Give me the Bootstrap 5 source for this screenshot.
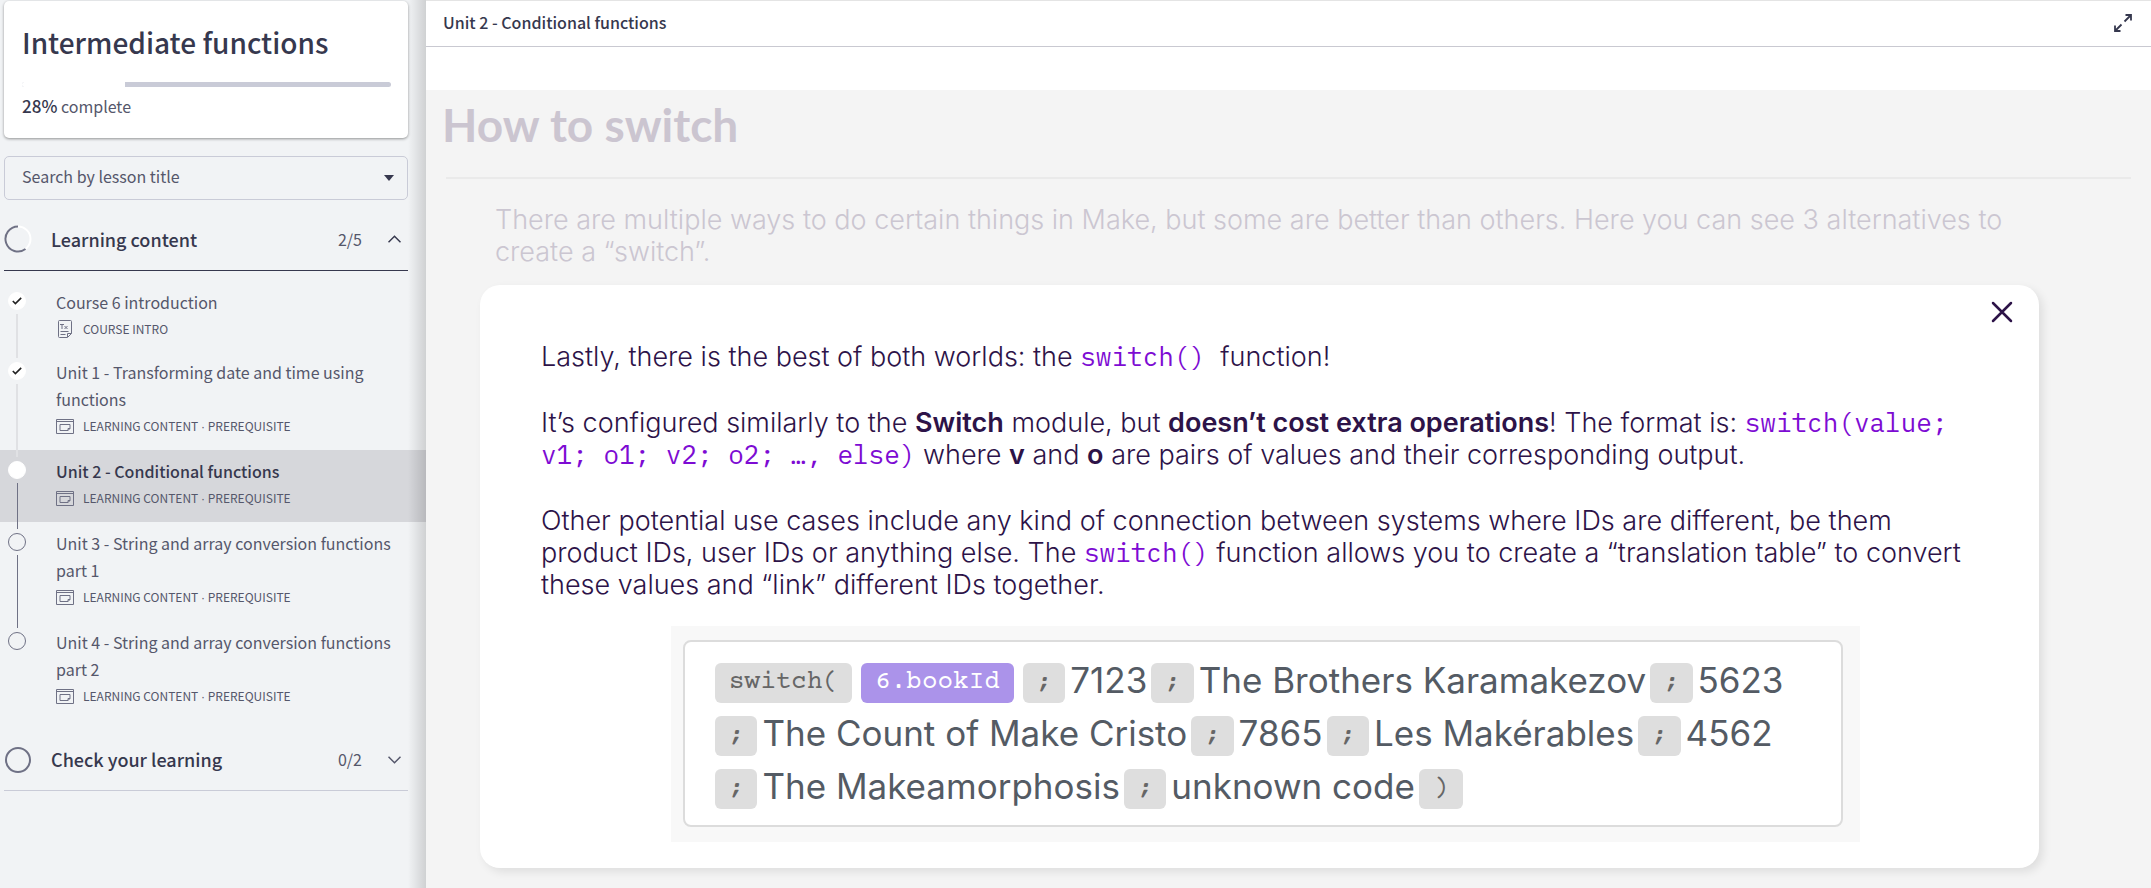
<!DOCTYPE html>
<html lang="en">
<head>
<meta charset="utf-8">
<meta name="viewport" content="width=device-width, initial-scale=1">
<title>Intermediate functions</title>
<link rel="stylesheet" href="https://cdn.jsdelivr.net/npm/bootstrap@5.3.0/dist/css/bootstrap.min.css">
<style>
  :root { --ink: #36384e; --ink-soft: #55576b; --line: #c9cbd7; --rail: #6f7185; }
  body { font-family: "Noto Sans CJK SC", "Noto Sans", sans-serif; font-size: 16px; line-height: 27px; color: var(--ink); background: #f4f4f4; }
  a { color: inherit; text-decoration: none; }

  .course-side { width: 426px; background: #f1f3f5; padding: 1px 18px 0 4px; position: relative; }
  .course-side::after { content: ""; position: absolute; inset: 0 0 0 auto; width: 18px; pointer-events: none; background: linear-gradient(to right, rgba(0,0,0,0), rgba(0,0,0,.14)); }
  .course-card { border: 0; border-radius: 5px; height: 137px; padding: 20px 17px 0 18px; box-shadow: 0 1px 3px rgba(0,0,0,.4); color: var(--ink); }
  .course-card h1 { font-size: 28px; line-height: 42px; font-weight: 500; margin: 0 0 19px; }
  .progress { height: 5px; border-radius: 3px; background: var(--line); }
  .progress-bar { background: #fff; }
  .done-text { margin-top: 5px; color: var(--ink-soft); }
  .done-text strong { font-weight: 500; color: var(--ink); font-size: 17px; }

  .lesson-search { height: 44px; margin-top: 18px; border: 1px solid var(--line); border-radius: 5px; padding: 0 13px 0 17px; }
  .lesson-search select { appearance: none; border: 0; background: none; outline: 0; padding: 0 0 3px; color: var(--ink-soft); font-size: 16px; }

  .section-head { height: 62px; border: 0; border-bottom: 1px solid var(--line); background: none; color: var(--ink); padding: 0 7px 0 0; text-align: left; }
  .section-head.is-open { border-color: var(--ink); height: 63px; margin-top: 8px; }
  .section-head .title { font-size: 18px; font-weight: 500; margin-left: 19px; }
  .section-head .count { font-size: 16px; color: var(--ink-soft); margin-right: 26px; }

  .lesson-list { margin: 10px -18px 9px -4px; }
  .lesson { display: flex; padding: 8px 24px 0 8px; }
  .lesson .step { width: 18px; margin-right: 30px; display: flex; flex-direction: column; align-items: center; }
  .lesson .dot { flex: none; width: 18px; height: 18px; margin: 3px 0 4px; border-radius: 50%; border: 1px solid var(--rail); display: flex; align-items: center; justify-content: center; }
  .lesson .dot.filled { background: #fff; border-color: #fff; }
  .lesson .rail { flex: 1; width: 1px; background: var(--rail); margin-bottom: -7px; z-index: 1; }
  .lesson .rail.done { width: 2px; background: #e0e1e4; }
  .lesson .info { flex: 1; padding-bottom: 10px; }
  .lesson .name { color: var(--ink-soft); display: block; }
  .lesson .meta { display: flex; align-items: center; gap: 9px; font-size: 12px; line-height: 25px; color: var(--ink-soft); }
  .lesson .sep-dot { font-family: "Liberation Sans", sans-serif; }
  .lesson.current { background: #d6d7db; }
  .lesson.current .name { font-weight: 500; color: var(--ink); }

  .top-bar { height: 47px; background: #fff; border-top: 1px solid #e4e4e4; border-bottom: 1px solid #c9c9d1; padding: 0 19px 2px 17px; }
  .top-bar h2 { font-size: 16px; line-height: 27px; font-weight: 500; margin: 0; }
  .spacer-band { height: 43px; background: #fff; }

  .lesson-body { padding: 0 20px 20px 16px; font-family: Inter, "Liberation Sans", sans-serif; font-size: 27px; font-weight: 300; line-height: 32px; background: #f4f4f4; }
  .lesson-body h3 { font-family: Lato, sans-serif; font-weight: 700; font-size: 46px; line-height: 56px; color: #cbc5d0; margin: 0; padding: 7px 0 24px; }
  .lesson-body hr { margin: 0 0 25px 4px; border: 0; height: 2px; background: #eaeaea; opacity: 1; }
  .lead-in { margin: 0 120px 17px 53px; color: #cbc6d1; }

  .popup { margin: 0 92px 0 38px; background: #fff; border-radius: 20px; box-shadow: 4px 4px 10px rgba(0,0,0,.09); color: #2d1348; padding: 56px 61px 26px; position: relative; }
  .popup p { margin: 0 0 34px; }
  .popup p.last { margin-bottom: 25px; }
  .popup strong { font-weight: 600; }
  .popup code { font-family: "IBM Plex Mono", "Liberation Mono", monospace; font-size: 26px; font-weight: 400; line-height: 1; color: #7d0bd3; }
  .popup .close-x { position: absolute; top: 14px; right: 24px; padding: 0; border: 0; background: none; color: #2d1348; line-height: 0; }

  .formula { background: #f8f8f8; padding: 14px 17px 15px 12px; margin: 0 118px 0 130px; }
  .formula-box { background: #fff; border: 2px solid #dcdcdc; border-radius: 8px; padding: 12px 30px; color: #545b64; font-size: 35px; font-weight: 400; line-height: 53px; }
  .formula-row { display: flex; align-items: center; white-space: pre; }
  .chip { flex: none; font-family: "Courier Prime", "Liberation Mono", monospace; font-size: 26px; line-height: 40px; height: 40px; border-radius: 6px; background: #dedede; color: #666; padding: 0 14px; margin: 5px 5px 0 4px; }
  .chip:first-child { margin-left: 0; }
  .chip.ref { background: #ab93ea; color: #fff; }
  .chip.sep { font-style: italic; font-weight: 700; font-size: 24px; }
</style>
</head>
<body>
<div class="d-flex min-vh-100">
  <aside class="course-side flex-shrink-0">
    <div class="card course-card">
      <h1>Intermediate functions</h1>
      <div class="progress" role="progressbar" aria-label="Course progress" aria-valuenow="28" aria-valuemin="0" aria-valuemax="100"><div class="progress-bar" style="width:28%"></div></div>
      <div class="done-text"><strong>28%</strong> complete</div>
    </div>

    <div class="lesson-search d-flex align-items-center">
      <select class="flex-grow-1" aria-label="Search by lesson title"><option>Search by lesson title</option></select>
      <svg width="10" height="6" viewBox="0 0 10 6" aria-hidden="true"><path d="M0 0h10L5 6z" fill="#36384e"/></svg>
    </div>

    <button type="button" class="section-head is-open w-100 d-flex align-items-center">
      <svg width="28" height="28" viewBox="0 0 28 28" fill="none" stroke-width="2" aria-hidden="true"><circle cx="14" cy="14" r="12.5" stroke="#fff"/><path d="M14 1.500A12.500 12.500 0 1 0 21.500 24" stroke="#6f7185"/></svg>
      <span class="title flex-grow-1">Learning content</span>
      <span class="count">2/5</span>
      <svg width="13" height="8" viewBox="0 0 13 8" fill="none" stroke="#36384e" stroke-width="1.500" aria-hidden="true"><path d="M.5 7.200l6-6 6 6"/></svg>
    </button>

    <div class="lesson-list">
      <a class="lesson" href="#">
        <span class="step"><span class="dot filled"><svg width="10" height="8" viewBox="0 0 10 8" fill="none" stroke="#222" stroke-width="1.600"><path d="M.8 4l2.600 2.600L9.200.9"/></svg></span><span class="rail done"></span></span>
        <span class="info"><span class="name">Course 6 introduction</span>
          <span class="meta"><svg width="18" height="18" viewBox="0 0 18 18" fill="none" stroke="#6f7185"><path d="M3.500.5h11a1 1 0 0 1 1 1v12l-4 4h-8a1 1 0 0 1-1-1v-15a1 1 0 0 1 1-1zM11.500 17v-3.500h4M4.500 11.500h8M4.500 14.500h5M4 4.500h4M6 4.500v4.500M8.500 6l3 3M11.500 6l-3 3"/></svg>COURSE INTRO</span></span>
      </a>
      <a class="lesson" href="#">
        <span class="step"><span class="dot filled"><svg width="10" height="8" viewBox="0 0 10 8" fill="none" stroke="#222" stroke-width="1.600"><path d="M.8 4l2.600 2.600L9.200.9"/></svg></span><span class="rail done"></span></span>
        <span class="info"><span class="name">Unit 1 - Transforming date and time using functions</span>
          <span class="meta"><svg width="18" height="15" viewBox="0 0 18 15" fill="none" stroke="#6f7185"><path d="M.5.5h17v14H.5zM.5 2.500h17M4 5.500h10v4l-2 2H4zM12 11.500v-2h2"/></svg><span>LEARNING CONTENT <span class="sep-dot">·</span> PREREQUISITE</span></span></span>
      </a>
      <a class="lesson current" href="#" aria-current="page">
        <span class="step"><span class="dot filled"></span><span class="rail"></span></span>
        <span class="info"><span class="name">Unit 2 - Conditional functions</span>
          <span class="meta"><svg width="18" height="15" viewBox="0 0 18 15" fill="none" stroke="#6f7185"><path d="M.5.5h17v14H.5zM.5 2.500h17M4 5.500h10v4l-2 2H4zM12 11.500v-2h2"/></svg><span>LEARNING CONTENT <span class="sep-dot">·</span> PREREQUISITE</span></span></span>
      </a>
      <a class="lesson" href="#">
        <span class="step"><span class="dot"></span><span class="rail"></span></span>
        <span class="info"><span class="name">Unit 3 - String and array conversion functions part 1</span>
          <span class="meta"><svg width="18" height="15" viewBox="0 0 18 15" fill="none" stroke="#6f7185"><path d="M.5.5h17v14H.5zM.5 2.500h17M4 5.500h10v4l-2 2H4zM12 11.500v-2h2"/></svg><span>LEARNING CONTENT <span class="sep-dot">·</span> PREREQUISITE</span></span></span>
      </a>
      <a class="lesson" href="#">
        <span class="step"><span class="dot"></span></span>
        <span class="info"><span class="name">Unit 4 - String and array conversion functions part 2</span>
          <span class="meta"><svg width="18" height="15" viewBox="0 0 18 15" fill="none" stroke="#6f7185"><path d="M.5.5h17v14H.5zM.5 2.500h17M4 5.500h10v4l-2 2H4zM12 11.500v-2h2"/></svg><span>LEARNING CONTENT <span class="sep-dot">·</span> PREREQUISITE</span></span></span>
      </a>
    </div>

    <button type="button" class="section-head w-100 d-flex align-items-center">
      <svg width="28" height="28" viewBox="0 0 28 28" fill="none" stroke="#6f7185" stroke-width="2" aria-hidden="true"><circle cx="14" cy="14" r="12"/></svg>
      <span class="title flex-grow-1">Check your learning</span>
      <span class="count">0/2</span>
      <svg width="13" height="8" viewBox="0 0 13 8" fill="none" stroke="#55576b" stroke-width="1.500" aria-hidden="true"><path d="M.5.8l6 6 6-6"/></svg>
    </button>
  </aside>

  <main class="flex-grow-1">
    <header class="top-bar d-flex align-items-center justify-content-between">
      <h2>Unit 2 - Conditional functions</h2>
      <button type="button" class="btn p-0 border-0 lh-1" aria-label="Full screen">
        <svg width="18" height="18" viewBox="0 0 18 18" fill="none" stroke="#36384e" stroke-width="1.800"><path d="M10.500 7.500L16.500 1.500M11.500 1H17v5.500M7.500 10.500L1.500 16.500M1 11.500V17h5.500"/></svg>
      </button>
    </header>
    <div class="spacer-band"></div>

    <div class="lesson-body">
      <h3>How to switch</h3>
      <hr>
      <p class="lead-in">There are multiple ways to do certain things in Make, but some are better than others. Here you can see 3 alternatives to create a “switch”.</p>

      <section class="popup">
        <button type="button" class="close-x" aria-label="Close">
          <svg width="26" height="26" viewBox="0 0 26 26" fill="none" stroke="currentColor" stroke-width="2.500" stroke-linecap="round"><path d="M4 4l18 18M22 4L4 22"/></svg>
        </button>
        <p>Lastly, there is the best of both worlds: the <code>switch()</code>&nbsp; function!</p>
        <p>It’s configured similarly to the <strong>Switch</strong> module, but <strong>doesn’t cost extra operations</strong>! The format is: <code>switch(value; v1; o1; v2; o2; …, else)</code> where <strong>v</strong> and <strong>o</strong> are pairs of values and their corresponding output.</p>
        <p class="last">Other potential use cases include any kind of connection between systems where IDs are different, be them product IDs, user IDs or anything else. The <code>switch()</code> function allows you to create a “translation table” to convert these values and “link” different IDs together.</p>

        <div class="formula">
          <div class="formula-box">
            <div class="formula-row"><span class="chip fn">switch(</span><span class="chip ref">6.bookId</span><span class="chip sep">;</span>7123<span class="chip sep">;</span>The Brothers Karamakezov<span class="chip sep">;</span>5623</div>
            <div class="formula-row"><span class="chip sep">;</span>The Count of Make Cristo<span class="chip sep">;</span>7865<span class="chip sep">;</span>Les Makérables<span class="chip sep">;</span>4562</div>
            <div class="formula-row"><span class="chip sep">;</span>The Makeamorphosis<span class="chip sep">;</span>unknown code<span class="chip">)</span></div>
          </div>
        </div>
      </section>
    </div>
  </main>
</div>
<script src="https://cdn.jsdelivr.net/npm/bootstrap@5.3.0/dist/js/bootstrap.bundle.min.js"></script>
</body>
</html>
